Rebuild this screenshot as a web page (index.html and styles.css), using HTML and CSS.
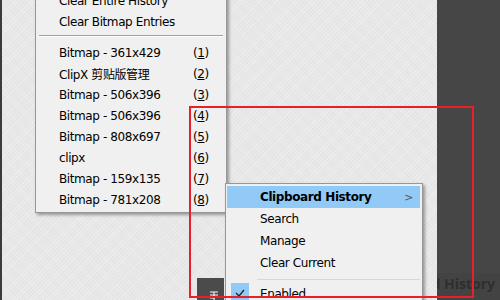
FILE: index.html
```html
<!DOCTYPE html>
<html lang="en">
<head>
    <meta charset="UTF-8">
    <title>clipx menus</title>
    <link rel="stylesheet" href="styles.css">
</head>
<body>
    <div class="desktop">
        <div class="edge"></div>
        <div class="workarea">
            <div class="tray-tile">
                <svg width="10" height="10" viewBox="0 0 10 10"><path d="M1 2h8M1 5h8M1 8h5M5 2v8" stroke="#fff" stroke-width="1" fill="none"/></svg>
            </div>
        </div>
        <div class="side-panel">
            <div class="side-title"><span>Clipboard History</span></div>
        </div>
    </div>

    <!-- history popup -->
    <div class="menu history">
        <div class="item"><span>Clear Entire History</span></div>
        <div class="item"><span>Clear Bitmap Entries</span></div>
        <div class="sep"></div>
        <div class="item"><span>Bitmap - 361x429</span><span class="key">(<u>1</u>)</span></div>
        <div class="item"><span>ClipX 剪贴版管理</span><span class="key">(<u>2</u>)</span></div>
        <div class="item"><span>Bitmap - 506x396</span><span class="key">(<u>3</u>)</span></div>
        <div class="item"><span>Bitmap - 506x396</span><span class="key">(<u>4</u>)</span></div>
        <div class="item"><span>Bitmap - 808x697</span><span class="key">(<u>5</u>)</span></div>
        <div class="item"><span>clipx</span><span class="key">(<u>6</u>)</span></div>
        <div class="item"><span>Bitmap - 159x135</span><span class="key">(<u>7</u>)</span></div>
        <div class="item"><span>Bitmap - 781x208</span><span class="key">(<u>8</u>)</span></div>
    </div>

    <!-- tray popup -->
    <div class="menu tray">
        <div class="row active"><b>Clipboard History</b><span class="arrow">&gt;</span></div>
        <div class="row">Search</div>
        <div class="row">Manage</div>
        <div class="row">Clear Current</div>
        <div class="sep"></div>
        <div class="row">
            <span class="check">
                <svg width="10" height="8" viewBox="0 0 10 8"><path d="M1 4l3 3 5-6" stroke="#222" stroke-width="1.3" fill="none"/></svg>
            </span>
            Enabled
        </div>
    </div>

    <div class="mark"></div>
</body>
</html>
```

FILE: styles.css
```css
body{
    margin: 0;
    width: 500px;
    height: 300px;
    overflow: hidden;
    position: relative;
    font-family: "DejaVu Sans", "Noto Sans CJK SC", sans-serif;
    font-size: 12px;
    letter-spacing: -0.4px;
    color: #000;
}

.desktop{
    display: flex;
    height: 300px;
}

.edge{
    width: 2px;
    background: #3b3b3b;
}

.workarea{
    flex: 1;
    position: relative;
    background-color: #e8e8e8;
    background-image:
        repeating-linear-gradient(135deg, rgba(255,255,255,0.25) 0 1px, transparent 1px 3px),
        repeating-linear-gradient(45deg, rgba(0,0,0,0.02) 0 1px, transparent 1px 2px);
}

.tray-tile{
    position: absolute;
    left: 195px;
    top: 278px;
    width: 27px;
    height: 22px;
    background: #4b4b4b;
    display: flex;
    align-items: flex-end;
    justify-content: center;
    padding-left: 6px;
    box-sizing: border-box;
}

.side-panel{
    width: 63px;
    background: #464646;
    display: flex;
    flex-direction: column;
    justify-content: flex-end;
}

.side-title{
    height: 27px;
    background: #434343;
    display: flex;
    justify-content: flex-end;
    overflow: hidden;
    padding-right: 5px;
    padding-top: 1px;
    box-sizing: border-box;
    white-space: nowrap;
    font-family: "Noto Sans", sans-serif;
    font-weight: bold;
    font-size: 14px;
    letter-spacing: 0;
    color: #2f2f2f;
}

/*****
menus
******/
.menu{
    position: absolute;
    background: #f0f0f0;
    border: 1px solid #979797;
    box-shadow: 2px 2px 3px rgba(0,0,0,0.35);
}

.history{
    left: 35px;
    top: -13px;
    width: 190px;
    padding: 2px 0;
}

.history .item{
    height: 21px;
    display: flex;
    align-items: center;
    padding-left: 23px;
    position: relative;
}

.history .key{
    position: absolute;
    left: 157px;
}

.history .sep{
    height: 1px;
    background: #a0a0a0;
    margin: 3px 3px 5px 3px;
    border-bottom: 1px solid #fff;
}

.tray{
    left: 225px;
    top: 183px;
    width: 196px;
    padding-top: 2px;
}

.tray .row{
    height: 22px;
    display: flex;
    align-items: center;
    padding-left: 33px;
    margin: 0 2px 0 1px;
    position: relative;
}

.tray .active{
    background: #91c9f7;
}

.tray .arrow{
    position: absolute;
    right: 7px;
    color: #555;
    font-size: 11px;
}

.tray .sep{
    height: 1px;
    background: #d7d7d7;
    margin: 5px 2px 3px 31px;
}

.check{
    position: absolute;
    left: 4px;
    top: 0;
    width: 18px;
    height: 20px;
    background: #91c9f7;
    display: flex;
    align-items: center;
    justify-content: center;
}

.mark{
    position: absolute;
    left: 189px;
    top: 106px;
    width: 281px;
    height: 188px;
    border: 2px solid #e8202a;
}
```
